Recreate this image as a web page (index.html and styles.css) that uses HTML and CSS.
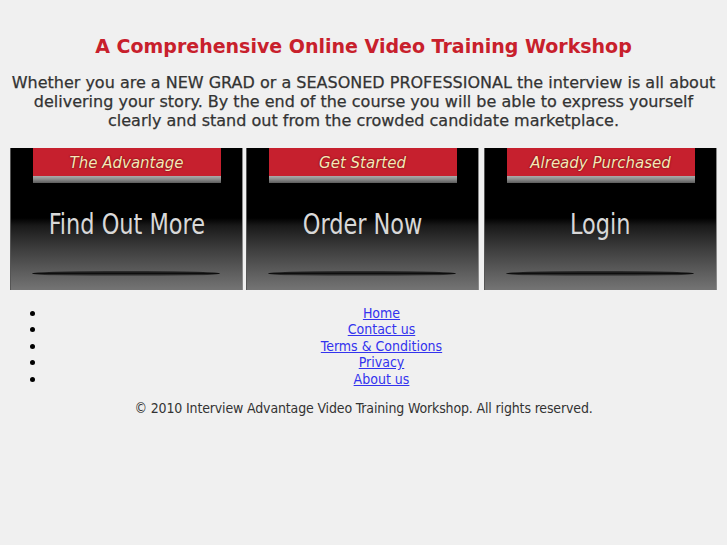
FILE: index.html
```html
<!DOCTYPE html>
<html>
<head>
<meta charset="utf-8">
<title>Interview Advantage</title>
<link rel="stylesheet" href="styles.css">
</head>
<body>
<div class="page">
  <h1 class="title">A Comprehensive Online Video Training Workshop</h1>
  <p class="intro">Whether you are a NEW GRAD or a SEASONED PROFESSIONAL the interview is all about delivering your story. By the end of the course you will be able to express yourself clearly and stand out from the crowded candidate marketplace.</p>
  <div class="tiles">
    <a class="tile tile-1" href="#">
      <span class="banner"><span class="banner-text">The Advantage</span></span>
      <span class="tile-label">Find Out More</span>
      <span class="shadow-line"></span>
    </a>
    <a class="tile tile-2" href="#">
      <span class="banner"><span class="banner-text">Get Started</span></span>
      <span class="tile-label">Order Now</span>
      <span class="shadow-line"></span>
    </a>
    <a class="tile tile-3" href="#">
      <span class="banner"><span class="banner-text">Already Purchased</span></span>
      <span class="tile-label">Login</span>
      <span class="shadow-line"></span>
    </a>
  </div>
  <ul class="nav">
    <li><a href="#">Home</a></li>
    <li><a href="#">Contact us</a></li>
    <li><a href="#">Terms &amp; Conditions</a></li>
    <li><a href="#">Privacy</a></li>
    <li><a href="#">About us</a></li>
  </ul>
  <p class="copy">© 2010 Interview Advantage Video Training Workshop. All rights reserved.</p>
</div>
</body>
</html>
```

FILE: styles.css
```css
html, body {
  margin: 0;
  padding: 0;
  background: #f0f0f0;
}
body {
  font-family: "DejaVu Sans", Verdana, sans-serif;
  color: #333;
}
.page {
  padding: 0 10px;
}
.title {
  margin: 0;
  padding-top: 35px;
  font-size: 19px;
  line-height: 22px;
  font-weight: bold;
  color: #c8202c;
  text-align: center;
}
.intro {
  margin: 16px 0 0;
  font-size: 16px;
  line-height: 19px;
  text-align: center;
  color: #333;
  -webkit-text-stroke: 0.25px #333;
}
.tiles {
  display: flex;
  margin-top: 18px;
}
.tile {
  position: relative;
  display: flex;
  flex-direction: column;
  align-items: center;
  width: 233px;
  height: 142px;
  text-decoration: none;
  background: linear-gradient(to bottom, #000 0, #000 70px, #1a1a1a 78px, #3c3c3c 100px, #5e5e5e 125px, #747474 142px);
  box-shadow: inset -1px 0 0 #8a8a8a, inset 1px 0 0 #555;
}
.tile-2 { margin-left: 3px; }
.tile-3 { margin-left: 5px; }
.banner {
  display: block;
  width: 188px;
  height: 35px;
  background: linear-gradient(to bottom, #c6202e 0, #c6202e 28px, #acacac 28px, #8e8e8e 31px, #5c5c5c 35px);
  text-align: center;
}
.banner-text {
  display: block;
  padding-top: 6px;
  font-size: 15px;
  line-height: 18px;
  font-style: italic;
  color: #f8e6b6;
  text-shadow: 0 0 2px #7a0e14, 0 0 1px #7a0e14;
}
.tile-label {
  margin-top: 24px;
  font-family: "DejaVu Sans Condensed", "DejaVu Sans", sans-serif;
  font-size: 29px;
  line-height: 34px;
  color: #d8d8d8;
  white-space: nowrap;
  transform: scaleX(0.86);
}
.shadow-line {
  position: absolute;
  left: 22px;
  top: 123px;
  width: 188px;
  height: 5px;
  border-radius: 40% / 50%;
  background: linear-gradient(to bottom, rgba(0,0,0,0.45), rgba(0,0,0,0.85) 50%, rgba(0,0,0,0.15));
}
.nav {
  margin: 15px 0 0;
  padding: 0 0 0 36px;
  list-style: none;
  font-family: "DejaVu Sans Condensed", "DejaVu Sans", sans-serif;
  font-size: 14px;
  line-height: 16.4px;
}
.nav li {
  position: relative;
  text-align: center;
}
.nav li::before {
  content: "";
  position: absolute;
  left: -16px;
  top: 6px;
  width: 5px;
  height: 5px;
  border-radius: 50%;
  background: #000;
}
.nav a {
  color: #3333ee;
  text-decoration: underline;
}
.copy {
  margin: 13px 0 0;
  font-family: "DejaVu Sans Condensed", "DejaVu Sans", sans-serif;
  font-size: 14px;
  line-height: 16px;
  letter-spacing: -0.15px;
  text-align: center;
  color: #333;
}
```
